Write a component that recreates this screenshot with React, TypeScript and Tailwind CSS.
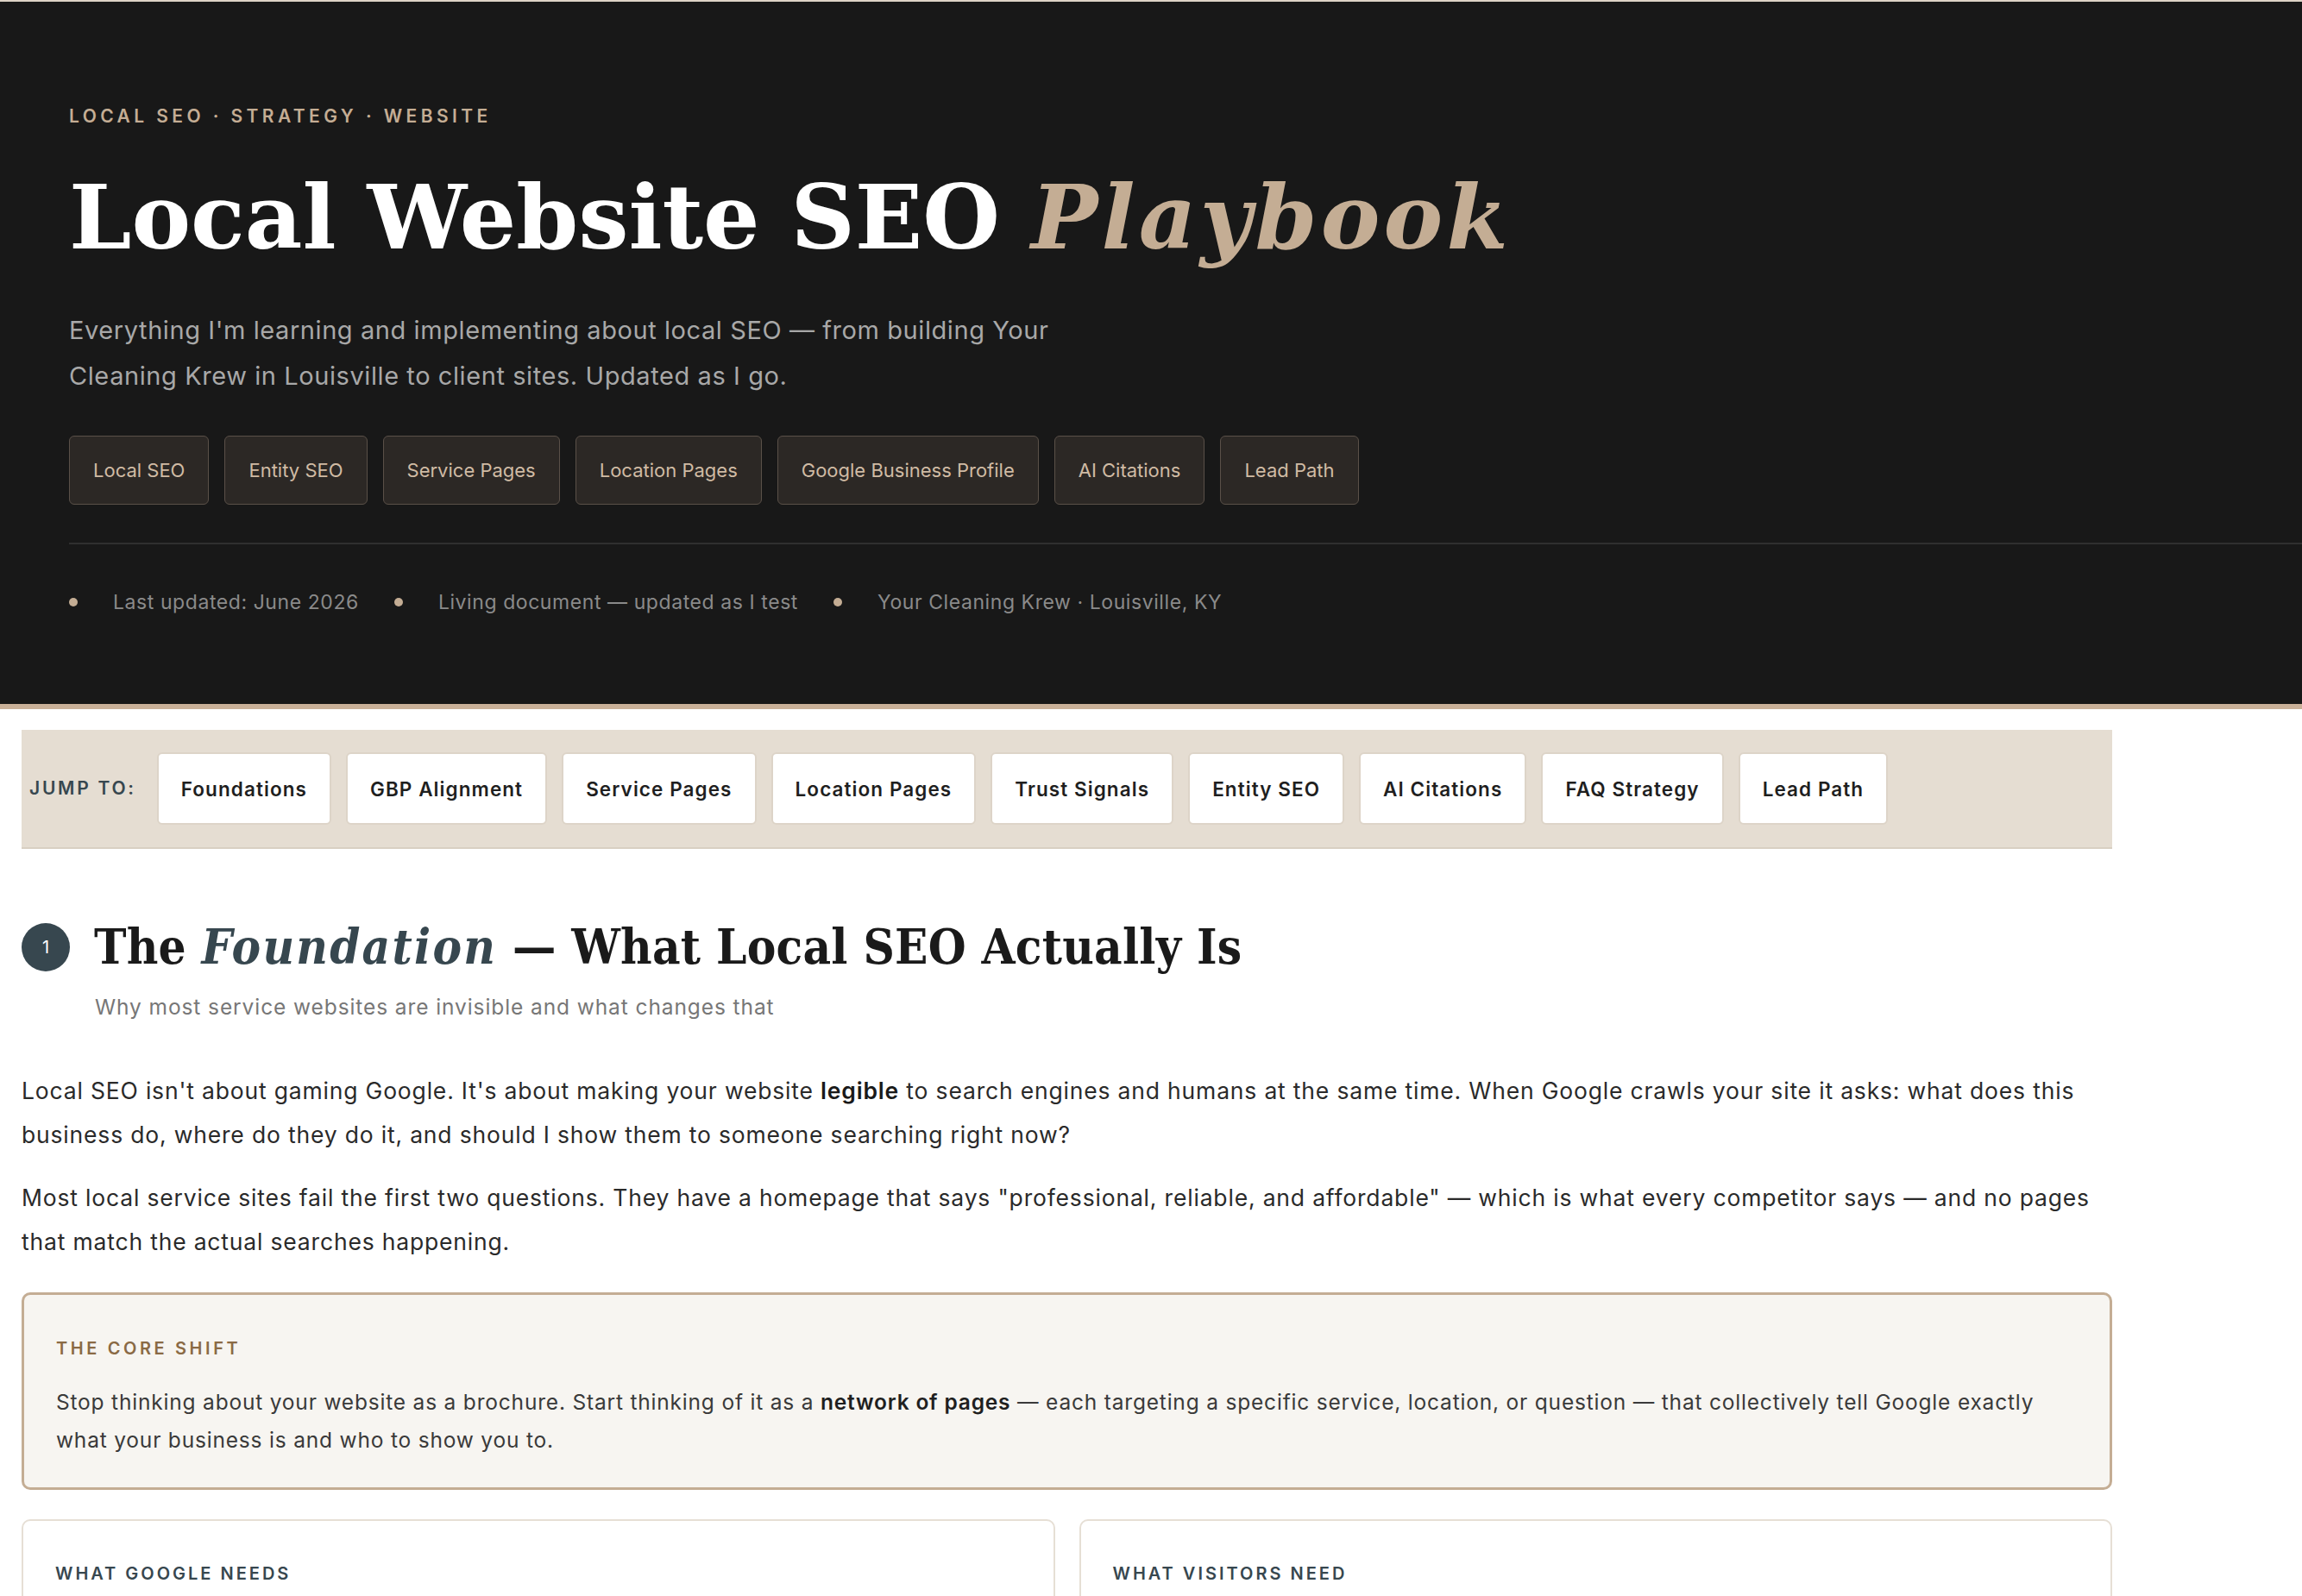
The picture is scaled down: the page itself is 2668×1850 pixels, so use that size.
import React from "react";

const heroTags = [
  "Local SEO",
  "Entity SEO",
  "Service Pages",
  "Location Pages",
  "Google Business Profile",
  "AI Citations",
  "Lead Path",
];

const metaItems = [
  "Last updated: June 2026",
  "Living document — updated as I test",
  "Your Cleaning Krew · Louisville, KY",
];

const jumpLinks = [
  "Foundations",
  "GBP Alignment",
  "Service Pages",
  "Location Pages",
  "Trust Signals",
  "Entity SEO",
  "AI Citations",
  "FAQ Strategy",
  "Lead Path",
];

const googleNeeds = [
  "A clear primary service and category",
  "Consistent name, address and phone everywhere",
  "One page per service and per location",
];

const visitorNeeds = [
  "Proof you serve their neighbourhood",
  "Real photos, reviews and prices",
  "One obvious way to book or call",
];

function Hero() {
  return (
    <header className="border-t-2 border-b-[6px] border-t-[#ddd3c6] border-b-[#c9b098] bg-[#181818] pb-[101px] pl-[80px] pt-[119px]">
      <p className="text-[21px] font-semibold uppercase leading-[28px] tracking-[0.21em] text-[#c4ad94]">
        Local SEO · Strategy · Website
      </p>
      <h1 className="mt-[46px] font-['DejaVu_Serif',serif] text-[103px] font-bold leading-[113px] text-white">
        Local Website SEO{" "}
        <em className="tracking-[0.04em] text-[#c4ad94]">Playbook</em>
      </h1>
      <p className="mt-[48px] max-w-[1224px] text-[29px] leading-[53px] tracking-[0.02em] text-[#a8a8a8]">
        Everything I'm learning and implementing about local SEO — from building Your
        Cleaning Krew in Louisville to client sites. Updated as I go.
      </p>
      <div className="mt-[43px] flex flex-wrap gap-[18px]">
        {heroTags.map((tag) => (
          <span
            key={tag}
            className="rounded-[6px] border border-[#5a5048] bg-[#2c2825] px-[27px] py-[22.5px] text-[22px] leading-[33px] text-[#d0bba4]"
          >
            {tag}
          </span>
        ))}
      </div>
      <div className="mt-[44px] h-[2px] bg-[#2f2f2f]" />
      <div className="mt-[50px] flex items-center gap-[41px]">
        {metaItems.map((item) => (
          <React.Fragment key={item}>
            <span className="h-[10px] w-[10px] rounded-full bg-[#c4ad94]" />
            <span className="text-[23px] leading-[34px] tracking-[0.025em] text-[#8a8a8a]">
              {item}
            </span>
          </React.Fragment>
        ))}
      </div>
    </header>
  );
}

function JumpNav() {
  return (
    <nav className="mt-[24px] flex items-center gap-[17px] border-b-2 border-[#d8cfc2] bg-[#e5ddd2] py-[26px] pl-[9px]">
      <span className="mr-[7px] text-[21px] font-semibold uppercase tracking-[0.13em] text-[#37474f]">
        Jump to:
      </span>
      {jumpLinks.map((link) => (
        <a
          key={link}
          href={`#${link.toLowerCase().replace(/\s+/g, "-")}`}
          className="rounded-[6px] border-2 border-[#ddd4c8] bg-white px-[26px] py-[23.5px] text-[22.5px] font-semibold leading-[33px] tracking-[0.048em] text-[#1f1f1f]"
        >
          {link}
        </a>
      ))}
    </nav>
  );
}

function NeedsCard({ title, items }: { title: string; items: string[] }) {
  return (
    <div className="rounded-[10px] border-2 border-[#e6dfd5] bg-white px-[37px] pb-[40px] pt-[43px]">
      <p className="text-[20px] font-semibold uppercase leading-[36px] tracking-[0.15em] text-[#37474f]">
        {title}
      </p>
      <ul className="mt-[20px] flex flex-col gap-[14px]">
        {items.map((item) => (
          <li key={item} className="text-[24.5px] leading-[40px] tracking-[0.035em] text-[#3a3a3a]">
            {item}
          </li>
        ))}
      </ul>
    </div>
  );
}

function Foundations() {
  return (
    <section id="foundations" className="mt-[80px]">
      <div className="flex items-center gap-[28px]">
        <span className="flex h-[56px] w-[56px] items-center justify-center rounded-full bg-[#37474f] text-[20px] text-white">
          1
        </span>
        <h2 className="font-['DejaVu_Serif',serif] text-[56px] font-bold leading-[67px] tracking-[0.004em] font-stretch-condensed text-[#1a1a1a]">
          The <em className="tracking-[0.04em] text-[#37474f]">Foundation</em> — What Local SEO
          Actually Is
        </h2>
      </div>
      <p className="mt-[18px] pl-[85px] text-[24.5px] leading-[36px] tracking-[0.037em] text-[#777777]">
        Why most service websites are invisible and what changes that
      </p>

      <p className="mt-[54px] text-[26.5px] leading-[51px] tracking-[0.031em] text-[#2a2a2a]">
        Local SEO isn't about gaming Google. It's about making your website{" "}
        <strong className="font-semibold text-[#1a1a1a]">legible</strong> to search engines and
        humans at the same time. When Google crawls your site it asks: what does this business do,
        where do they do it, and should I show them to someone searching right now?
      </p>
      <p className="mt-[22px] text-[26.5px] leading-[51px] tracking-[0.031em] text-[#2a2a2a]">
        Most local service sites fail the first two questions. They have a homepage that says
        "professional, reliable, and affordable" — which is what every competitor says — and no
        pages that match the actual searches happening.
      </p>

      <div className="mt-[33px] rounded-[10px] border-[3px] border-[#c4ad94] bg-[#f7f5f1] pb-[33px] pl-[37px] pr-[37px] pt-[44px]">
        <p className="text-[20px] font-semibold uppercase leading-[36px] tracking-[0.18em] text-[#8a6a45]">
          The Core Shift
        </p>
        <p className="mt-[22px] text-[24.5px] leading-[44px] tracking-[0.033em] text-[#3a3a3a]">
          Stop thinking about your website as a brochure. Start thinking of it as a{" "}
          <strong className="font-semibold text-[#1f1f1f]">network of pages</strong> — each
          targeting a specific service, location, or question — that collectively tell Google
          exactly what your business is and who to show you to.
        </p>
      </div>

      <div className="mt-[34px] grid grid-cols-2 gap-[28px]">
        <NeedsCard title="What Google Needs" items={googleNeeds} />
        <NeedsCard title="What Visitors Need" items={visitorNeeds} />
      </div>
    </section>
  );
}

export default function App() {
  return (
    <div className="min-h-screen bg-white font-['Inter',sans-serif]">
      <Hero />
      <main className="ml-[25px] w-[2423px] pb-[120px]">
        <JumpNav />
        <Foundations />
      </main>
    </div>
  );
}
